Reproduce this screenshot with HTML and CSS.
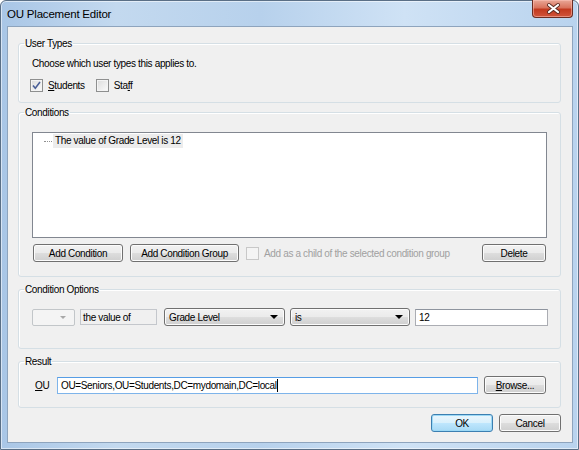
FILE: index.html
```
<!doctype html>
<html lang="en">
<head>
    <meta charset="UTF-8">
    <title>OU Placement Editor</title>
    <link rel="stylesheet" href="styles.css">
</head>
<body>
<div class="window">
    <div class="titlebar">
        <span class="title">OU Placement Editor</span>
        <span class="close">
            <svg width="41" height="17" viewBox="0 0 41 17">
                <path d="M16 5 L25 12 M25 5 L16 12" stroke="#5a2a22" stroke-width="4" stroke-linecap="round"/>
                <path d="M16 5 L25 12 M25 5 L16 12" stroke="#fff" stroke-width="2.2" stroke-linecap="round"/>
            </svg>
        </span>
    </div>

    <div class="client">
        <fieldset class="group group-types">
            <legend>User Types</legend>
            <p class="hint">Choose which user types this applies to.</p>
            <div class="checks">
                <label class="check">
                    <span class="box">
                        <svg width="11" height="11" viewBox="0 0 11 11"><path d="M2 5.5 L4.3 8.2 L9 2" fill="none" stroke="#4a5f97" stroke-width="1.6"/></svg>
                    </span>
                    <span><u>S</u>tudents</span>
                </label>
                <label class="check check-staff">
                    <span class="box"></span>
                    <span>Sta<u>f</u>f</span>
                </label>
            </div>
        </fieldset>

        <fieldset class="group group-conditions">
            <legend>Conditions</legend>
            <div class="tree">
                <div class="node">
                    <span class="dots"></span>
                    <span class="node-text">The value of Grade Level is 12</span>
                </div>
            </div>
            <div class="actions">
                <span class="btn btn-add">Add Condition</span>
                <span class="btn btn-group">Add Condition Group</span>
                <label class="check disabled">
                    <span class="box"></span>
                    <span>Add as a child of the selected condition group</span>
                </label>
                <span class="btn btn-delete">Delete</span>
            </div>
        </fieldset>

        <fieldset class="group group-options">
            <legend>Condition Options</legend>
            <div class="row">
                <span class="combo combo-off"><span class="arrow"></span></span>
                <span class="field field-ro">the value of</span>
                <span class="combo combo-grade">Grade Level<span class="arrow"></span></span>
                <span class="combo combo-op">is<span class="arrow"></span></span>
                <span class="field field-value">12</span>
            </div>
        </fieldset>

        <fieldset class="group group-result">
            <legend>Result</legend>
            <div class="row">
                <span class="ou-label"><u>O</u>U</span>
                <span class="field field-ou">OU=Seniors,OU=Students,DC=mydomain,DC=local<span class="caret"></span></span>
                <span class="btn btn-browse"><u>B</u>rowse...</span>
            </div>
        </fieldset>

        <div class="footer">
            <span class="btn btn-default">OK</span>
            <span class="btn">Cancel</span>
        </div>
    </div>
</div>
</body>
</html>
```

FILE: styles.css
```
* {
    padding: 0;
    margin: 0;
    box-sizing: border-box;
}

body {
    width: 579px;
    height: 450px;
    font-family: "Liberation Sans", Arial, sans-serif;
    font-size: 10px;
    letter-spacing: -0.35px;
    color: #000;
    background: #fff;
}

.window {
    width: 579px;
    height: 450px;
    display: flex;
    flex-direction: column;
    border: 1px solid #5a6f86;
    border-radius: 6px 6px 0 0;
    padding: 0 5px 6px 6px;
    background: linear-gradient(90deg, #a9c6e6 0%, #c3d9ef 20%, #b7d1ec 45%, #cfe2f5 70%, #b9d3ee 100%);
    box-shadow: inset 0 0 0 1px rgba(255, 255, 255, 0.55);
}

.titlebar {
    flex: none;
    height: 25px;
    display: flex;
    align-items: flex-start;
}

.title {
    font-size: 11.5px;
    letter-spacing: -0.2px;
    line-height: 14px;
    margin-top: 6px;
    color: #000;
}

.close {
    margin-left: auto;
    margin-top: -1px;
    width: 41px;
    height: 18px;
    border: 1px solid #6b2c22;
    border-top: 0;
    border-radius: 0 0 4px 4px;
    background: linear-gradient(#e9a797 0%, #d9735d 45%, #c2391f 55%, #d0553c 100%);
    box-shadow: inset 0 0 0 1px rgba(255, 200, 190, 0.5);
}

.close svg {
    display: block;
}

.client {
    flex: 1;
    min-height: 0;
    display: flex;
    flex-direction: column;
    border: 1px solid #8ea4bd;
    background: #f0f0f0;
    padding: 10px 11px 10px 10px;
}

/* group boxes */
.group {
    flex: none;
    min-width: 0;
    border: 1px solid #d5dfe5;
    border-radius: 3px;
    padding: 0 13px;
    box-shadow: inset 1px 1px 0 #fff;
}

.group legend {
    line-height: 13px;
    padding: 0 1px;
    margin-left: -8px;
}

.group-types {
    padding-top: 7px;
    padding-bottom: 10px;
}

.group-conditions {
    margin-top: 3px;
    padding-top: 13px;
    padding-bottom: 14px;
}

.group-options {
    margin-top: 6px;
    padding-top: 12px;
    padding-bottom: 22px;
}

.group-result {
    margin-top: 6px;
    padding-top: 8px;
    padding-bottom: 13px;
}

.hint {
    line-height: 13px;
}

.checks {
    margin-top: 8px;
    height: 14px;
    display: flex;
    align-items: center;
}

.check {
    display: flex;
    align-items: center;
    line-height: 13px;
    white-space: nowrap;
}

.check .box {
    width: 13px;
    height: 13px;
    margin-left: -2px;
    margin-right: 5px;
    border: 1px solid #8e8f8f;
    background: linear-gradient(135deg, #dcdcdc, #fbfbfb);
    box-shadow: inset 0 0 0 1px #f4f4f4;
    display: flex;
    align-items: center;
    justify-content: center;
}

.check-staff {
    margin-left: 13px;
}

.check.disabled {
    color: #a0a0a0;
    margin-left: 7px;
}

.check.disabled .box {
    margin-left: 0;
    border-color: #c8c8c8;
    background: #f4f4f4;
    box-shadow: none;
}

/* tree */
.tree {
    height: 106px;
    background: #fff;
    border: 1px solid #828790;
    padding: 1px 0 0 11px;
}

.node {
    display: flex;
    align-items: center;
    height: 14px;
}

.dots {
    width: 8px;
    height: 1px;
    margin-right: 1px;
    border-top: 1px dotted #909090;
}

.node-text {
    background: #ececec;
    line-height: 14px;
    padding: 0 2px;
}

/* buttons */
.btn {
    flex: none;
    display: flex;
    align-items: center;
    justify-content: center;
    height: 18px;
    border: 1px solid #707070;
    border-radius: 3px;
    background: linear-gradient(#f2f2f2 0%, #ebebeb 48%, #dddddd 52%, #cfcfcf 100%);
    box-shadow: inset 0 0 0 1px #fcfcfc;
    line-height: 13px;
}

.actions {
    display: flex;
    align-items: center;
    margin-top: 6px;
}

.btn-add {
    width: 90px;
    margin-left: 1px;
}

.btn-group {
    width: 109px;
    margin-left: 7px;
}

.btn-delete {
    width: 64px;
    margin-left: auto;
    margin-right: 1px;
}

/* fields */
.row {
    display: flex;
    align-items: center;
    height: 18px;
}

.field {
    flex: none;
    height: 17px;
    display: flex;
    align-items: center;
    padding-left: 3px;
    background: #fff;
    border: 1px solid #abadb3;
    border-top-color: #8e949e;
    white-space: nowrap;
}

.field-ro {
    width: 77px;
    margin-left: 5px;
    height: 16px;
    padding-left: 2px;
    background: #f0f0f0;
    border-color: #c4c7cc;
}

.field-value {
    width: 133px;
    margin-left: 5px;
}

.combo {
    flex: none;
    position: relative;
    height: 18px;
    display: flex;
    align-items: center;
    padding-left: 4px;
    border: 1px solid #707070;
    border-radius: 3px;
    background: linear-gradient(#f2f2f2 0%, #ebebeb 48%, #dddddd 52%, #cfcfcf 100%);
    box-shadow: inset 0 0 0 1px #fcfcfc;
}

.combo .arrow {
    position: absolute;
    right: 6px;
    top: 6px;
    border-left: 4px solid transparent;
    border-right: 4px solid transparent;
    border-top: 4px solid #000;
}

.combo-off {
    width: 43px;
    height: 17px;
    border-color: #c2c6c9;
    border-radius: 2px;
    background: #f4f4f4;
    box-shadow: none;
}

.combo-off .arrow {
    border-left-width: 3px;
    border-right-width: 3px;
    border-top: 3px solid #a8a8a8;
    right: 8px;
}

.combo-grade {
    width: 121px;
    margin-left: 7px;
}

.combo-op {
    width: 120px;
    margin-left: 5px;
}

.ou-label {
    width: 25px;
    padding-left: 3px;
    line-height: 13px;
}

.field-ou {
    width: 421px;
    border-color: #7eb4ea;
    border-top-color: #569de5;
}

.caret {
    width: 1px;
    height: 13px;
    background: #000;
}

.btn-browse {
    width: 62px;
    margin-left: 6px;
}

.footer {
    flex: none;
    margin-top: 6px;
    display: flex;
    justify-content: flex-end;
    gap: 6px;
}

.footer .btn {
    width: 62px;
}

.btn-default {
    border-color: #3c7fb1;
    box-shadow: inset 0 0 0 1px #9cd9f6;
    background: linear-gradient(#eaf6fd 0%, #d9f0fc 48%, #bee6fd 52%, #a7d9f5 100%);
}
```
